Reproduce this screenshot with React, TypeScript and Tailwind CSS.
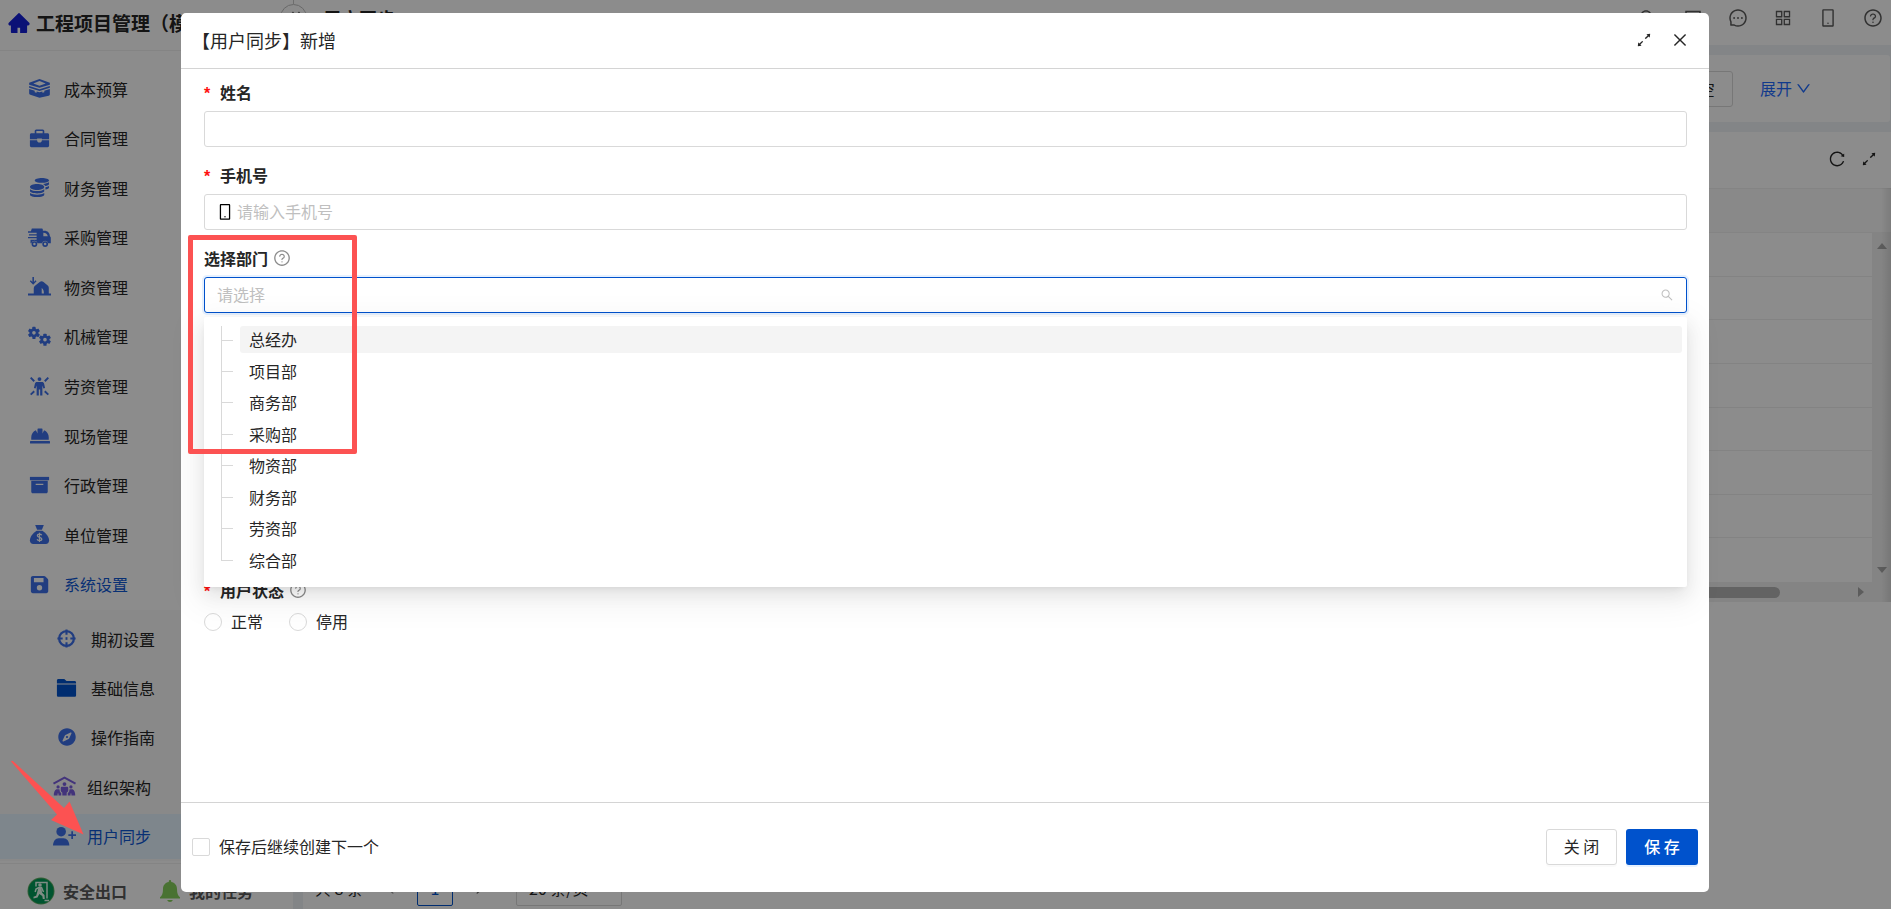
import type { ReactNode } from 'react';
import {
  AiFillHome,
  AiOutlineAppstore,
  AiOutlineArrowsAlt,
  AiOutlineClose,
  AiOutlineDown,
  AiOutlineLeft,
  AiOutlineMessage,
  AiOutlineMobile,
  AiOutlineQuestionCircle,
  AiOutlineReload,
  AiOutlineRight,
  AiOutlineSearch,
} from 'react-icons/ai';
import { FaCoins, FaCompass, FaHardHat } from 'react-icons/fa';

function Svg({ children, className = '' }: { children: ReactNode; className?: string }) {
  return (
    <svg viewBox="0 0 24 24" className={`h-[23px] w-[23px] shrink-0 ${className}`} fill="currentColor" aria-hidden="true">
      {children}
    </svg>
  );
}

const LayersIcon = () => (
  <Svg>
    <path d="M12 2.200 22.800 6v2L12 11.200 1.200 8V6zM12 4.300 5.500 6.900 12 9.200l6.500-2.300z" fillRule="evenodd" />
    <path d="M1.200 9.400 12 12.800l10.800-3.400v1.800L12 14.500 1.200 11.200z" />
    <path d="M1.200 12.600 7 14.400v1.500l2 .6V15l3 1 3-1v1.500l2-.6v-1.500l5.800-1.800v5.400c0 .8-.5 1.400-1.200 1.600L12 21.600l-9.600-3c-.7-.2-1.200-.8-1.200-1.600z" />
  </Svg>
);

const BriefcaseIcon = () => (
  <Svg>
    <path d="M7 4.200c0-.9.700-1.700 1.600-1.700h6.800c.9 0 1.600.8 1.600 1.700v2.300h3.500c.8 0 1.500.7 1.500 1.500v4.700h-7.500v-.7h-5v.7H2V8c0-.8.700-1.500 1.500-1.500H7zM8.700 4.200v2.300h6.600V4.200z" fillRule="evenodd" />
    <path d="M2 13.800h7.500c0 1.500 1 2.400 2.500 2.400s2.500-.9 2.500-2.400H22v5.700c0 .8-.7 1.500-1.500 1.500h-17c-.8 0-1.500-.7-1.500-1.500z" />
  </Svg>
);

const TruckIcon = () => (
  <Svg>
    <path
      fillRule="evenodd"
      d="M4 2.500h10.200c.7 0 1.300.6 1.300 1.300V5h1.800c3 0 5.500 2.300 5.500 5.500l1 1.500v6h-2.700a3.300 3.300 0 0 0-6.500 0H10a3.300 3.300 0 0 0-6.500 0H2.600v-3.600H9v-1.500H0v-1.400h9V10H1V8.600h8V7H0V5.500h3zM16 7v3.600h4.600C20.200 8.400 18.700 7 16 7z"
    />
    <path fillRule="evenodd" d="M6.700 15.800a3 3 0 1 1 0 6 3 3 0 0 1 0-6zm0 1.700a1.300 1.300 0 1 0 0 2.600 1.300 1.300 0 0 0 0-2.600zM17.900 15.800a3 3 0 1 1 0 6 3 3 0 0 1 0-6zm0 1.700a1.300 1.300 0 1 0 0 2.600 1.300 1.300 0 0 0 0-2.600z" />
  </Svg>
);

const WarehouseIcon = () => (
  <Svg>
    <path d="M4.600 2.200h1.600v5l1.700-1.700 1 1-3.500 3.600-3.500-3.600 1-1 1.700 1.700z" />
    <path fillRule="evenodd" d="M0 19.300h6V14c0-.9.400-1.700 1-2.400l5.200-4.200c1.300-1 2.700-1 4 0l4.400 3.500c.7.700 1.100 1.500 1.100 2.400v6H24v2.200H0zM14.300 13.500v5.800h2.300c0-2.600-.5-4.700-2.300-5.800z" />
  </Svg>
);

const Gear = ({ x, y }: { x: number; y: number }) => (
  <g transform={`translate(${x} ${y})`}>
    <circle r="3.300" fill="none" stroke="currentColor" strokeWidth="2.800" />
    {[0, 60, 120, 180, 240, 300].map((a) => (
      <rect key={a} x="-1.700" y="-6.300" width="3.400" height="3" rx=".6" transform={`rotate(${a})`} />
    ))}
  </g>
);

const GearsIcon = () => (
  <Svg>
    <Gear x={6.200} y={8.200} />
    <Gear x={17.700} y={15.300} />
  </Svg>
);

const WorkerIcon = () => (
  <Svg>
    <circle cx="12" cy="4.300" r="2" />
    <path d="M9.500 7.200h5c1.300 0 2 .7 2.300 1.900l1 4.500-1.700.5-1.100-3.200V21.500h-2.300V15h-1.400v6.500H9V10.900l-1.100 3.200-1.700-.5 1-4.500c.3-1.200 1-1.900 2.300-1.900z" />
    <path d="m2.800 2.800 3.700 3.700M21.200 2.800l-3.700 3.700M2.800 20.500l3.700-3.500M21.200 20.500l-3.700-3.500" stroke="currentColor" strokeWidth="2" fill="none" />
  </Svg>
);

const ArchiveIcon = () => (
  <Svg>
    <path d="M2 3h20v3.500H2z" />
    <path fillRule="evenodd" d="M3.400 7.100h17.200v11.400c0 .9-.7 1.600-1.600 1.600H5c-.9 0-1.600-.7-1.600-1.600zM8 10.200v1.200h8v-1.200z" />
  </Svg>
);

const MoneyBagIcon = () => (
  <Svg>
    <path d="M7.500 2h9l-2 5h-5z" />
    <path d="M9 8h6c4 2.600 7 6.300 7 10 0 2.300-1.300 3.800-3.500 3.800h-13C3.300 21.800 2 20.300 2 18c0-3.700 3-7.400 7-10z" />
    <path d="M14.300 12.800c-.4-.8-1.200-1.200-2.300-1.200-1.300 0-2.200.6-2.200 1.600 0 2.300 4.600 1.100 4.600 3.500 0 1-.9 1.700-2.400 1.700-1.300 0-2.200-.5-2.500-1.400M12 10.300v9.400" stroke="#fff" strokeWidth="1.300" fill="none" />
  </Svg>
);

const DiskIcon = () => (
  <Svg>
    <path
      fillRule="evenodd"
      d="M5 3h11.800c.5 0 1 .2 1.300.6L20.500 6c.4.400.6.9.6 1.400V19c0 1.100-.9 2-2 2H5c-1.100 0-2-.9-2-2V5c0-1.100.9-2 2-2zm1.200 2.300V9.700h10V5.300zM12 12.600a2.800 2.800 0 1 0 0 5.600 2.800 2.800 0 0 0 0-5.600z"
    />
  </Svg>
);

const TargetIcon = () => (
  <Svg>
    <circle cx="12" cy="12" r="7.700" fill="none" stroke="currentColor" strokeWidth="2.400" />
    <path d="M12 2.500V8M12 16v5.500M2.500 12H8M16 12h5.500" stroke="currentColor" strokeWidth="2.200" />
    <path d="M12 10.600v2.800" stroke="currentColor" strokeWidth="2" />
  </Svg>
);

const FolderIcon = () => (
  <Svg className="text-[#0052cc]">
    <path d="M2 3.500C2 2.700 2.700 2 3.500 2h6.200L12 4.300h8.500c.8 0 1.500.7 1.500 1.500v.9H2z" />
    <path d="M2 7.800h20v11.400c0 .8-.7 1.500-1.500 1.500h-17c-.8 0-1.500-.7-1.500-1.500z" />
  </Svg>
);

const OrgIcon = () => (
  <Svg className="text-[#7b5fe0]">
    <path d="M12 1.500 24 8.200l-1 1.700L12 4 1 9.900 0 8.200z" />
    <circle cx="12" cy="9.500" r="2" />
    <circle cx="5.300" cy="12.500" r="1.700" />
    <circle cx="18.700" cy="12.500" r="1.700" />
    <path d="M9.300 12.200h5.400c.7 0 1.200.5 1.200 1.200v3.500l-1.600 1.500v2.900H9.700v-2.900l-1.600-1.500v-3.500c0-.7.5-1.200 1.200-1.200z" />
    <path d="M3.500 14.800h3.200l.6 3 1.300 1v2.500H5.700v-2h-.9v2H.8c0-3 .7-5.500 2.700-6.500zM20.500 14.800h-3.200l-.6 3-1.300 1v2.500h2.900v-2h.9v2h4c0-3-.7-5.500-2.700-6.500z" />
  </Svg>
);

const UserPlusIcon = () => (
  <Svg>
    <circle cx="8.500" cy="7" r="5" />
    <path d="M0 21.500c0-4.500 2.500-7.700 6-7.700h5c3.500 0 6 3.200 6 7.700z" />
    <path d="M20 6.500v8M16 10.500h8" stroke="currentColor" strokeWidth="1.800" />
  </Svg>
);

const ExitIcon = () => (
  <svg viewBox="0 0 28 28" className="h-[28px] w-[28px]" aria-hidden="true">
    <circle cx="14" cy="14" r="13.500" fill="#5fae62" />
    <circle cx="14" cy="14" r="12.600" fill="#009a58" />
    <path d="M9 9.500V5.500h11v16" stroke="#e8fff2" strokeWidth="1.500" fill="none" />
    <circle cx="13" cy="8" r="1.800" fill="#e8fff2" />
    <path d="M11.500 10.500h3l2 4.500M12 10.500l-3 1.500-.8 3" stroke="#e8fff2" strokeWidth="1.500" fill="none" />
    <path d="M11.500 10.500h3l.5 5 2.500 2.500.3 4h-2l-.5-3-3-2-1.800 3.500-4 1v-1.700l2.700-1z" fill="#e8fff2" />
    <path d="M17.500 23.500h4.500" stroke="#e8fff2" strokeWidth="1.500" />
  </svg>
);

const BellIcon = () => (
  <svg viewBox="0 0 20 22" className="h-[22px] w-[20px] text-[#86d05c]" fill="currentColor" aria-hidden="true">
    <path d="M8.800 1.200a1.200 1.200 0 0 1 2.400 0v.7c3.600.6 5.800 3.400 5.800 7 0 4.500 1 6.600 3 8.300v1.300H0v-1.300c2-1.700 3-3.800 3-8.300 0-3.600 2.200-6.400 5.800-7zM7.200 20h5.600c-.3 1.200-1.500 2-2.800 2s-2.500-.8-2.800-2z" />
  </svg>
);

const MENU: [string, ReactNode][] = [
  ['成本预算', <LayersIcon />],
  ['合同管理', <BriefcaseIcon />],
  ['财务管理', <FaCoins className="h-[19px] w-[19px]" />],
  ['采购管理', <TruckIcon />],
  ['物资管理', <WarehouseIcon />],
  ['机械管理', <GearsIcon />],
  ['劳资管理', <WorkerIcon />],
  ['现场管理', <FaHardHat className="h-5 w-5" />],
  ['行政管理', <ArchiveIcon />],
  ['单位管理', <MoneyBagIcon />],
  ['系统设置', <DiskIcon />],
];

const SUBMENU: { label: string; icon: ReactNode; deep?: boolean; active?: boolean }[] = [
  { label: '期初设置', icon: <TargetIcon /> },
  { label: '基础信息', icon: <FolderIcon /> },
  { label: '操作指南', icon: <FaCompass className="h-[18px] w-[18px]" /> },
  { label: '组织架构', icon: <OrgIcon />, deep: true },
  { label: '用户同步', icon: <UserPlusIcon />, deep: true, active: true },
];

const DEPARTMENTS = ['总经办', '项目部', '商务部', '采购部', '物资部', '财务部', '劳资部', '综合部'];

function Sidebar() {
  return (
    <aside className="flex w-[293px] shrink-0 flex-col bg-white">
      <div className="flex h-[51px] shrink-0 items-center gap-[5px] border-b border-[#f0f0f0] pb-[4px] pl-[7px]">
        <AiFillHome className="h-6 w-6 text-[#1420d8]" />
        <h1 className="text-[19px] font-bold whitespace-nowrap">工程项目管理（模板）</h1>
      </div>
      <nav className="mt-[14px] flex shrink-0 flex-col">
        <div className="grid h-[545px] auto-rows-fr">
          {MENU.map(([label, icon]) => (
            <a
              key={label}
              href="#"
              className={`flex items-center gap-[13px] pb-[2px] pl-[28px] ${label === '系统设置' ? 'text-[#0f58d4]' : ''}`}
            >
              <span className="flex w-[23px] justify-center text-[#3d70ea]">{icon}</span>
              {label}
            </a>
          ))}
        </div>
        <div className="grid h-[251px] auto-rows-fr bg-[#fafafa] pt-[4px]">
          {SUBMENU.map(({ label, icon, deep, active }) => (
            <a
              key={label}
              href="#"
              className={`my-[2px] flex items-center ${deep ? 'gap-[11px] pl-[53px]' : 'gap-[13px] pl-[55px]'} ${
                active ? 'bg-[#e6f4ff] text-[#0f58d4]' : ''
              }`}
            >
              <span className="flex w-[23px] justify-center text-[#3d70ea]">{icon}</span>
              {label}
            </a>
          ))}
        </div>
      </nav>
      <div className="mt-[2px] flex h-[56px] shrink-0 items-center border-t border-[#f0f0f0] pb-[2px] pl-[27px] font-bold text-[#595959]">
        <a href="#" className="flex items-center gap-2">
          <ExitIcon />
          安全出口
        </a>
        <a href="#" className="ml-[33px] flex items-center gap-[9px]">
          <BellIcon />
          我的任务
        </a>
      </div>
    </aside>
  );
}

function TopBar() {
  return (
    <header className="flex h-[45px] shrink-0 justify-between bg-white pr-[8px] pl-[30px] text-[#5a5a5a]">
      <h2 className="h-9 text-[18px] leading-9 font-bold text-[#262626]">用户同步</h2>
      <div className="flex h-9 items-center gap-[25px]">
        <AiOutlineSearch className="h-5 w-5" />
        <svg viewBox="0 0 20 20" className="h-5 w-5" fill="none" stroke="currentColor" strokeWidth="1.500" aria-hidden="true">
          <path d="M3 3.500h14v14H3zM6 8h8M6 12h8" />
        </svg>
        <AiOutlineMessage className="h-5 w-5" />
        <AiOutlineAppstore className="h-5 w-5" />
        <AiOutlineMobile className="h-5 w-5" />
        <AiOutlineQuestionCircle className="h-5 w-5" />
      </div>
    </header>
  );
}

function Triangle({ className }: { className: string }) {
  return (
    <svg viewBox="0 0 10 6" className={`h-[6px] w-[10px] text-[#a8a8a8] ${className}`} aria-hidden="true">
      <path d="M5 0 10 6H0z" fill="currentColor" />
    </svg>
  );
}

function DataPanel() {
  return (
    <section className="flex flex-1 flex-col bg-white">
      <div className="flex h-14 shrink-0 items-center justify-end gap-[14px] pr-[13px] pb-[2px]">
        <button type="button" aria-label="刷新">
          <AiOutlineReload className="h-[18px] w-[18px]" />
        </button>
        <button type="button" aria-label="全屏">
          <AiOutlineArrowsAlt className="h-[18px] w-[18px]" />
        </button>
      </div>
      <div className="relative flex shrink-0 flex-col">
        <div className="h-[45px] border-y border-[#f0f0f0] bg-[#fafafa]" />
        <div className="flex h-[349px]">
          <table className="h-full flex-1 border-separate border-spacing-0">
            <tbody>
              {Array.from({ length: 8 }, (_, i) => (
                <tr key={i}>
                  <td className={`h-[43px] p-0 ${i < 7 ? 'border-b border-[#efefef]' : ''}`} />
                </tr>
              ))}
            </tbody>
          </table>
          <div className="flex w-[19px] flex-col items-center justify-between bg-[#f1f1f1] pt-[10px] pb-[9px]">
            <Triangle className="" />
            <Triangle className="rotate-180" />
          </div>
        </div>
        <div className="flex h-5 items-center justify-end bg-[#f1f1f1] pr-[25px]">
          <div className="mr-[76px] h-[11px] w-[900px] rounded-full bg-[#b4b4b4]" />
          <Triangle className="rotate-90" />
        </div>
        <div className="absolute inset-y-0 right-0 w-[10px] bg-linear-to-r from-transparent to-black/10" />
      </div>
      <div className="mt-auto mb-[3px] flex h-9 items-center pl-3">
        <span className="w-[67px]">共 8 条</span>
        <AiOutlineLeft className="h-4 w-4 text-[#999]" />
        <button type="button" className="ml-[19px] h-9 w-9 rounded-[2px] border border-[#0052cc] text-[#0052cc]">
          1
        </button>
        <AiOutlineRight className="ml-[19px] h-4 w-4 text-[#666]" />
        <select aria-label="每页条数" className="ml-[28px] h-9 w-[106px] appearance-none rounded-[2px] border border-[#d9d9d9] px-3">
          <option>20 条/页</option>
        </select>
      </div>
    </section>
  );
}

function Workspace() {
  return (
    <div className="flex h-full">
      <Sidebar />
      <main className="flex min-w-0 flex-1 flex-col bg-[#eef2f6]">
        <TopBar />
        <div className="flex min-h-0 flex-1 flex-col gap-[10px] pt-[10px] pl-[10px]">
          <section className="mr-[1px] flex h-[67px] shrink-0 items-center justify-end rounded-[3px] bg-white pr-[78px]">
            <button type="button" className="h-9 w-[72px] rounded-[3px] border border-[#d9d9d9]">
              清 空
            </button>
            <a href="#" className="ml-[27px] flex items-center gap-[3px] pb-[1px] text-[#1f6bff]">
              展开
              <AiOutlineDown className="h-[17px] w-[17px]" />
            </a>
          </section>
          <DataPanel />
        </div>
      </main>
      <div className="absolute top-0 left-[293px] h-1 border-l border-[#c8c8c8]" />
      <button
        type="button"
        aria-label="收起菜单"
        className="absolute top-1 left-[280px] flex h-[27px] w-[27px] items-center justify-center rounded-full border border-[#bfbfbf] bg-white text-[#666]"
      >
        <svg viewBox="0 0 14 14" className="h-[14px] w-[14px]" fill="none" stroke="currentColor" strokeWidth="1.500" aria-hidden="true">
          <path d="M6.500 1 1.500 7l5 6M12.500 1l-5 6 5 6" />
        </svg>
      </button>
    </div>
  );
}

function Label({ htmlFor, required, help, children }: { htmlFor: string; required?: boolean; help?: boolean; children: ReactNode }) {
  return (
    <label htmlFor={htmlFor} className="flex h-9 items-center pb-[2px] font-bold">
      {required && <span className="w-4 pt-1 font-['Liberation_Sans'] font-bold text-[#ff1010]">*</span>}
      {children}
      {help && <AiOutlineQuestionCircle className="ml-[5px] h-[18px] w-[18px] text-[#8c8c8c]" />}
    </label>
  );
}

function DepartmentMenu() {
  return (
    <div className="absolute top-10 right-0 left-0 rounded-[2px] bg-white pt-[7px] pr-[5px] pb-[11px] shadow-[0_3px_7px_-4px_rgba(0,0,0,0.12),0_7px_18px_rgba(0,0,0,0.08),0_10px_32px_9px_rgba(0,0,0,0.05)]">
      <ul className="grid h-[252px] auto-rows-fr">
        {DEPARTMENTS.map((name, i) => (
          <li key={name} className="flex items-center pl-[17px]">
            <span className="flex h-full w-[12px] flex-col">
              <span className={`flex-1 border-b border-l border-[#d9d9d9] ${i === 0 ? 'mt-[2px]' : ''}`} />
              <span className={`flex-1 ${i < DEPARTMENTS.length - 1 ? 'border-l border-[#d9d9d9]' : ''}`} />
            </span>
            <span className={`ml-[7px] h-[27px] flex-1 rounded-[3px] px-[9px] leading-[27px] ${i === 0 ? 'bg-[#f4f4f4]' : ''}`}>
              {name}
            </span>
          </li>
        ))}
      </ul>
    </div>
  );
}

function UserDialog() {
  return (
    <div role="dialog" aria-label="【用户同步】新增" className="flex flex-1 flex-col rounded-[5px] bg-white">
      <div className="flex h-14 shrink-0 items-center justify-between border-b border-[#d4d4d4] pr-5 pb-[1px] pl-[11px]">
        <h3 className="pb-[1px] text-[18px]">【用户同步】新增</h3>
        <div className="flex items-center gap-[18px]">
          <button type="button" aria-label="最大化">
            <AiOutlineArrowsAlt className="h-[18px] w-[18px]" />
          </button>
          <button type="button" aria-label="关闭窗口">
            <AiOutlineClose className="h-[18px] w-[18px]" />
          </button>
        </div>
      </div>

      <form className="flex flex-1 flex-col gap-[11px] pt-[6px] pr-[22px] pl-[23px]">
        <div>
          <Label htmlFor="name" required>
            姓名
          </Label>
          <input id="name" className="block h-9 w-full rounded-[3px] border border-[#d9d9d9] px-3 outline-none" />
        </div>
        <div>
          <Label htmlFor="phone" required>
            手机号
          </Label>
          <div className="flex h-9 items-center rounded-[3px] border border-[#d9d9d9] px-[11px]">
            <AiOutlineMobile className="h-[18px] w-[18px] text-black" />
            <input id="phone" placeholder="请输入手机号" className="ml-[3px] h-full flex-1 pb-[2px] outline-none placeholder:text-[#bfbfbf]" />
          </div>
        </div>
        <div>
          <Label htmlFor="dept" help>
            选择部门
          </Label>
          <div className="relative">
            <div className="flex h-9 items-center rounded-[3px] border border-[#0052cc] px-3 shadow-[0_0_0_2px_rgba(5,115,255,0.1)]">
              <input id="dept" placeholder="请选择" className="h-full flex-1 pb-[2px] outline-none placeholder:text-[#bfbfbf]" />
              <AiOutlineSearch className="h-[14px] w-[14px] text-[#bfbfbf]" />
            </div>
            <DepartmentMenu />
          </div>
        </div>
        <fieldset className="mt-[249px]">
          <Label htmlFor="status-on" required help>
            用户状态
          </Label>
          <div className="flex h-[26px] items-center gap-[26px]">
            <label className="flex items-center gap-[9px]">
              <input id="status-on" type="radio" name="status" className="h-[18px] w-[18px] appearance-none rounded-full border border-[#d9d9d9]" />
              <span className="pb-[3px]">正常</span>
            </label>
            <label className="flex items-center gap-[9px]">
              <input type="radio" name="status" className="h-[18px] w-[18px] appearance-none rounded-full border border-[#d9d9d9]" />
              <span className="pb-[3px]">停用</span>
            </label>
          </div>
        </fieldset>
      </form>

      <div className="flex h-[90px] shrink-0 items-center justify-between border-t border-[#d4d4d4] px-[11px] pb-[2px]">
        <label className="flex items-center gap-[9px]">
          <input type="checkbox" className="h-[18px] w-[18px] appearance-none rounded-[2px] border border-[#d9d9d9]" />
          <span className="pb-[2px]">保存后继续创建下一个</span>
        </label>
        <div className="flex gap-[9px]">
          <button type="button" className="h-9 w-[71px] rounded-[3px] border border-[#d9d9d9] bg-white pb-[2px] shadow-[0_2px_0_rgba(0,0,0,0.02)]">
            关 闭
          </button>
          <button type="button" className="h-9 w-[72px] rounded-[3px] bg-[#0052cc] pb-[2px] font-medium text-white shadow-[0_2px_0_rgba(5,115,255,0.1)]">
            保 存
          </button>
        </div>
      </div>
    </div>
  );
}

export default function App() {
  return (
    <div className="relative h-screen overflow-hidden font-['Noto_Sans_CJK_SC',sans-serif] text-[16px] leading-6 text-[#262626]">
      <Workspace />
      <div className="absolute inset-0 flex bg-black/45 pt-[13px] pr-[182px] pb-[17px] pl-[181px]">
        <UserDialog />
      </div>
      <div className="pointer-events-none absolute top-[235px] left-[188px] h-[219px] w-[169px] rounded-[2px] border-[5px] border-[#fc5252]" />
      <svg viewBox="0 0 74 75" className="pointer-events-none absolute top-[760px] left-[10px] h-[75px] w-[74px]" aria-hidden="true">
        <path d="M1 1.500Q2 0 4 2L54 48 59.500 41.500 73.500 74.500 41 60 47 54.500Z" fill="#fc5252" />
      </svg>
    </div>
  );
}
